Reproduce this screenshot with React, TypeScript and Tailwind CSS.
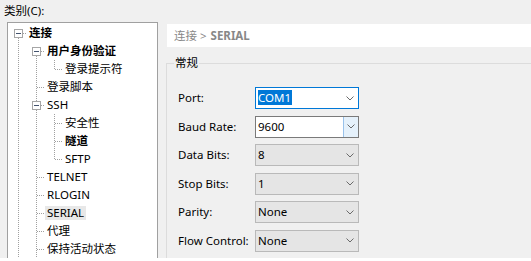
const font = "font-['Noto_Sans','Noto_Sans_CJK_SC',sans-serif]";

type Cell = 'I' | 'T' | 'L' | 'B' | 'BA';

function TreeCell({ kind }: { kind: Cell }) {
  const dash = { stroke: '#a0a0a0', strokeWidth: 1, strokeDasharray: '1 1' };
  return (
    <svg width="18" height="18" viewBox="0 0 18 18" className="shrink-0">
      {kind === 'I' && <line x1="9.5" y1="0" x2="9.5" y2="18" {...dash} />}
      {kind === 'T' && (
        <>
          <line x1="9.5" y1="0" x2="9.5" y2="18" {...dash} />
          <line x1="10" y1="9.5" x2="18" y2="9.5" {...dash} />
        </>
      )}
      {kind === 'L' && (
        <>
          <line x1="9.5" y1="0" x2="9.5" y2="9" {...dash} />
          <line x1="10" y1="9.5" x2="18" y2="9.5" {...dash} />
        </>
      )}
      {(kind === 'B' || kind === 'BA') && (
        <>
          {kind === 'BA' && <line x1="9.5" y1="0" x2="9.5" y2="5" {...dash} />}
          <line x1="9.5" y1="14" x2="9.5" y2="18" {...dash} />
          <line x1="14" y1="9.5" x2="18" y2="9.5" {...dash} />
          <rect x="5.5" y="5.5" width="8" height="8" fill="#fff" stroke="#a6a6a6" />
          <line x1="7" y1="9.5" x2="12" y2="9.5" stroke="#44546f" />
        </>
      )}
    </svg>
  );
}

const tree: { cells: Cell[]; label: string; bold?: boolean; selected?: boolean }[] = [
  { cells: ['B'], label: '连接', bold: true },
  { cells: ['I', 'B'], label: '用户身份验证', bold: true },
  { cells: ['I', 'I', 'L'], label: '登录提示符' },
  { cells: ['I', 'T'], label: '登录脚本' },
  { cells: ['I', 'BA'], label: 'SSH' },
  { cells: ['I', 'I', 'T'], label: '安全性' },
  { cells: ['I', 'I', 'T'], label: '隧道', bold: true },
  { cells: ['I', 'I', 'L'], label: 'SFTP' },
  { cells: ['I', 'T'], label: 'TELNET' },
  { cells: ['I', 'T'], label: 'RLOGIN' },
  { cells: ['I', 'T'], label: 'SERIAL', selected: true },
  { cells: ['I', 'T'], label: '代理' },
  { cells: ['I', 'T'], label: '保持活动状态' },
];

function Chevron() {
  return (
    <svg width="8" height="5" viewBox="0 0 8 5" className="shrink-0">
      <polyline points="0.5,0.5 4,4 7.5,0.5" fill="none" stroke="#6a6a6a" strokeWidth="1" />
    </svg>
  );
}

function Combo({ value, variant }: { value: string; variant: 'focus' | 'edit' | 'list' }) {
  if (variant === 'edit') {
    return (
      <div className="flex h-[22px] w-[104px] border border-[#7a7a7a] bg-white">
        <div className="flex flex-1 items-center pl-[2px] text-black">{value}</div>
        <div className="flex w-[15px] items-center justify-center border-l border-[#99c2eb] bg-[#e5f1fb]">
          <Chevron />
        </div>
      </div>
    );
  }
  return (
    <div
      className={
        variant === 'focus'
          ? 'flex h-[22px] w-[104px] items-center border border-[#0078d7] bg-white pr-[4px]'
          : 'flex h-[22px] w-[104px] items-center border border-[#b9b9b9] bg-[#e5e5e5] pr-[4px]'
      }
    >
      <div className="flex-1 pl-[2px]">
        {variant === 'focus' ? (
          <span className="bg-[#0078d7] pr-[1px] leading-[13px] text-white">{value}</span>
        ) : (
          <span className="text-black">{value}</span>
        )}
      </div>
      <Chevron />
    </div>
  );
}

const fields: { label: string; value: string; variant: 'focus' | 'edit' | 'list' }[] = [
  { label: 'Port:', value: 'COM1', variant: 'focus' },
  { label: 'Baud Rate:', value: '9600', variant: 'edit' },
  { label: 'Data Bits:', value: '8', variant: 'list' },
  { label: 'Stop Bits:', value: '1', variant: 'list' },
  { label: 'Parity:', value: 'None', variant: 'list' },
  { label: 'Flow Control:', value: 'None', variant: 'list' },
];

export default function App() {
  return (
    <div className={`h-[261px] w-[531px] bg-white text-[11.5px] text-black ${font}`}>
      <div className="flex h-[258px] overflow-hidden bg-[#f0f0f0]">
        {/* category tree */}
        <div className="flex w-[158px] shrink-0 flex-col">
          <div className="flex h-[23px] items-center pl-[4px] pb-[1px] leading-none">类别(C):</div>
          <div className="ml-[7px] w-[151px] flex-1 border border-b-0 border-[#a0a0a0] bg-white pl-[1px] pt-[1px]">
            {tree.map((row) => (
              <div key={row.label} className="flex h-[18px] items-center">
                {row.cells.map((c, i) => (
                  <TreeCell key={i} kind={c} />
                ))}
                <span
                  className={`ml-[0px] px-[2px] leading-[14px] ${row.bold ? 'font-bold' : ''} ${
                    row.selected ? 'bg-[#e8e8e8]' : ''
                  }`}
                >
                  {row.label}
                </span>
              </div>
            ))}
          </div>
        </div>

        {/* settings page */}
        <div className="flex flex-1 flex-col pt-[24px]">
          <div className="ml-[9px] flex h-[23px] items-center bg-white pl-[7px] text-[#888888]">
            连接 &gt; <span className="ml-[4px] font-bold">SERIAL</span>
          </div>
          <fieldset className="ml-[8px] mt-[8px] flex-1 border-l border-t border-[#dcdcdc]">
            <legend className="ml-[7px] px-[1px] leading-[16px]">常规</legend>
            <div className="mt-[16px] flex flex-col gap-[6.5px] pl-[11px]">
              {fields.map((f) => (
                <div key={f.label} className="flex h-[22px] items-center">
                  <div className="w-[77px]">{f.label}</div>
                  <Combo value={f.value} variant={f.variant} />
                </div>
              ))}
            </div>
          </fieldset>
        </div>
      </div>
    </div>
  );
}
